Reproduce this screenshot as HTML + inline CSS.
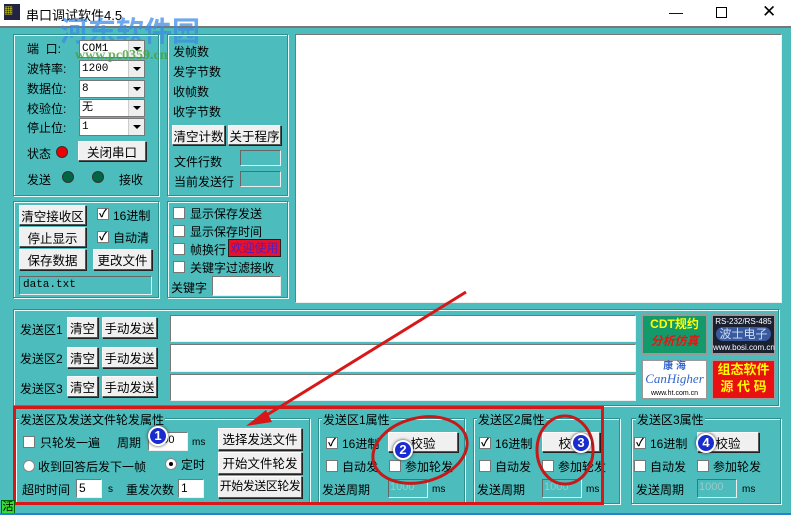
<!DOCTYPE html><html><head><meta charset="utf-8"><style>
*{margin:0;padding:0;box-sizing:border-box}
body{width:791px;height:515px;overflow:hidden;background:#4cbcbc;font-family:"Liberation Sans","Noto Sans CJK SC","WenQuanYi Zen Hei",sans-serif;font-size:12px;color:#000;position:relative}
.a{position:absolute;white-space:nowrap}
.g{position:absolute;border:1px solid #2f8f8f;box-shadow:inset 1px 1px 0 #e8ffff,1px 1px 0 #e8ffff}
.b{position:absolute;background:#f0f0f0;border:1px solid;border-color:#fff #555 #555 #fff;box-shadow:1px 1px 0 #222;text-align:center;font-size:12.5px;white-space:nowrap;overflow:hidden}
.t{position:absolute;background:#fff;border:1px solid;border-color:#777 #eee #eee #777}
.tg{position:absolute;background:#4cbcbc;border:1px solid;border-color:#666 #eee #eee #666}
.cb{position:absolute;width:12px;height:12px;background:#fff;border:1px solid #777;font-size:11px;line-height:10px;text-align:center;font-weight:bold}
.cmb{position:absolute;background:#fff;border:1px solid #777;height:18px;font-size:11px;padding-left:2px;line-height:16px;font-family:"Liberation Mono",monospace}
.cmb i{position:absolute;right:0;top:0;width:16px;height:16px;background:#eee;border-left:1px solid #ccc}
.cmb i:after{content:"";position:absolute;left:4px;top:6px;border:4px solid transparent;border-top:4px solid #000}
.led{position:absolute;width:12px;height:12px;border-radius:50%;border:1px solid #333}
.n{position:absolute;width:20px;height:20px;border-radius:50%;background:#1a2bd0;border:2px solid #fff;color:#fff;font-weight:bold;font-size:13px;text-align:center;line-height:16px;box-shadow:0 0 3px #333}
</style></head><body>
<div class="a" style="left:0;top:0;width:791px;height:26px;background:#fff"></div>
<div class="a" style="left:4px;top:4px;width:16px;height:16px;background:#224;color:#ff0;font-size:9px">▦</div>
<div class="a" style="left:26px;top:5px;font-size:13px">串口调试软件4.5</div>
<div class="a" style="left:669px;top:4px;font-size:14px">—</div>
<div class="a" style="left:716px;top:7px;width:11px;height:11px;border:1px solid #000"></div>
<div class="a" style="left:762px;top:2px;font-size:17px">✕</div>
<div class="a" style="left:0;top:26px;width:791px;height:2px;background:#777"></div>
<div class="a" style="left:60px;top:10px;font-size:28px;font-weight:bold;color:rgba(60,140,230,.75)">河东软件园</div>

<div class="g" style="left:13px;top:34px;width:146px;height:162px"></div>
<div class="a" style="left:27px;top:40px">端 &nbsp;口:</div>
<div class="a" style="left:27px;top:60px">波特率:</div>
<div class="a" style="left:27px;top:80px">数据位:</div>
<div class="a" style="left:27px;top:100px">校验位:</div>
<div class="a" style="left:27px;top:119px">停止位:</div>
<div class="cmb" style="left:79px;top:40px;width:66px">COM1<i></i></div>
<div class="cmb" style="left:79px;top:60px;width:66px">1200<i></i></div>
<div class="cmb" style="left:79px;top:80px;width:66px">8<i></i></div>
<div class="cmb" style="left:79px;top:99px;width:66px">无<i></i></div>
<div class="cmb" style="left:79px;top:118px;width:66px">1<i></i></div>
<div class="a" style="left:75px;top:48px;font-size:14px;font-weight:bold;color:rgba(70,160,60,.8);font-family:'Liberation Serif',serif">www.pc0359.cn</div>
<div class="a" style="left:27px;top:145px">状态</div>
<div class="led" style="left:56px;top:146px;background:#e00"></div>
<div class="b" style="left:78px;top:141px;width:68px;height:20px">关闭串口</div>
<div class="a" style="left:27px;top:171px">发送</div>
<div class="led" style="left:62px;top:171px;background:#064"></div>
<div class="led" style="left:92px;top:171px;background:#064"></div>
<div class="a" style="left:119px;top:171px">接收</div>

<div class="g" style="left:167px;top:34px;width:121px;height:162px"></div>
<div class="a" style="left:173px;top:43px">发帧数</div>
<div class="a" style="left:173px;top:63px">发字节数</div>
<div class="a" style="left:173px;top:83px">收帧数</div>
<div class="a" style="left:173px;top:103px">收字节数</div>
<div class="b" style="left:172px;top:125px;width:53px;height:20px">清空计数</div>
<div class="b" style="left:228px;top:125px;width:53px;height:20px">关于程序</div>
<div class="a" style="left:174px;top:153px">文件行数</div>
<div class="a" style="left:174px;top:173px">当前发送行</div>
<div class="tg" style="left:240px;top:150px;width:41px;height:16px"></div>
<div class="tg" style="left:240px;top:171px;width:41px;height:16px"></div>

<div class="t" style="left:295px;top:34px;width:487px;height:269px"></div>

<div class="g" style="left:13px;top:201px;width:146px;height:97px"></div>
<div class="b" style="left:19px;top:205px;width:67px;height:20px">清空接收区</div>
<div class="b" style="left:19px;top:227px;width:67px;height:20px">停止显示</div>
<div class="b" style="left:19px;top:249px;width:67px;height:21px">保存数据</div>
<div class="b" style="left:93px;top:249px;width:59px;height:21px">更改文件</div>
<div class="cb" style="left:97px;top:208px">✓</div><div class="a" style="left:113px;top:207px">16进制</div>
<div class="cb" style="left:97px;top:231px">✓</div><div class="a" style="left:113px;top:229px">自动清</div>
<div class="tg" style="left:19px;top:276px;width:133px;height:19px;font-family:'Liberation Mono',monospace;font-size:11px;padding:2px 3px">data.txt</div>

<div class="g" style="left:167px;top:201px;width:121px;height:97px"></div>
<div class="cb" style="left:173px;top:207px"></div><div class="a" style="left:190px;top:205px">显示保存发送</div>
<div class="cb" style="left:173px;top:225px"></div><div class="a" style="left:190px;top:223px">显示保存时间</div>
<div class="cb" style="left:173px;top:243px"></div><div class="a" style="left:190px;top:241px">帧换行</div>
<div class="a" style="left:228px;top:239px;width:53px;height:18px;background:#e8102a;border:1px solid #222;color:#5020c0;text-align:center;line-height:16px">欢迎使用</div>
<div class="cb" style="left:173px;top:261px"></div><div class="a" style="left:190px;top:259px">关键字过滤接收</div>
<div class="a" style="left:171px;top:279px">关键字</div>
<div class="t" style="left:212px;top:276px;width:69px;height:20px"></div>

<div class="g" style="left:13px;top:309px;width:766px;height:97px"></div>
<div class="a" style="left:20px;top:321px">发送区1</div>
<div class="a" style="left:20px;top:350px">发送区2</div>
<div class="a" style="left:20px;top:380px">发送区3</div>
<div class="b" style="left:67px;top:317px;width:31px;height:21px">清空</div>
<div class="b" style="left:102px;top:317px;width:55px;height:21px">手动发送</div>
<div class="b" style="left:67px;top:347px;width:31px;height:21px">清空</div>
<div class="b" style="left:102px;top:347px;width:55px;height:21px">手动发送</div>
<div class="b" style="left:67px;top:376px;width:31px;height:21px">清空</div>
<div class="b" style="left:102px;top:376px;width:55px;height:21px">手动发送</div>
<div class="t" style="left:170px;top:315px;width:466px;height:27px"></div>
<div class="t" style="left:170px;top:344px;width:466px;height:28px"></div>
<div class="t" style="left:170px;top:374px;width:466px;height:27px"></div>
<div class="a" style="left:641px;top:314px;width:67px;height:41px;background:#149a6a;border:2px solid #999;text-align:center;font-weight:bold;font-size:12px;line-height:17px;color:#ff0">CDT规约<br><span style="color:#e11;font-style:italic">分析仿真</span></div>
<div class="a" style="left:711px;top:314px;width:65px;height:41px;background:#1a2030;border:2px solid #999;text-align:center;color:#fff;font-size:8px;line-height:12px">RS-232/RS-485<br><span style="font-size:12px;color:#cde;background:#3a5aa0;border-radius:8px;padding:0 3px">波士电子</span><br>www.bosi.com.cn</div>
<div class="a" style="left:641px;top:359px;width:67px;height:41px;background:#fff;border:2px solid #999;text-align:center;font-size:10px;line-height:12px;color:#36c"><b>康 海</b><br><span style="font-family:'Liberation Serif',serif;font-style:italic;font-size:13px">CanHigher</span><br><span style="color:#000;font-size:7px">www.ht.com.cn</span></div>
<div class="a" style="left:711px;top:359px;width:65px;height:41px;background:#e81010;border:2px solid #999;text-align:center;font-weight:bold;font-size:13px;line-height:17px;color:#ff0">组态软件<br>源 代 码</div>

<div class="g" style="left:15px;top:418px;width:295px;height:86px"></div>
<div class="a" style="left:19px;top:411px;background:#4cbcbc;padding:0 1px">发送区及发送文件轮发属性</div>
<div class="cb" style="left:23px;top:436px"></div><div class="a" style="left:40px;top:434px">只轮发一遍</div>
<div class="a" style="left:117px;top:434px">周期</div>
<div class="t" style="left:148px;top:432px;width:40px;height:19px;font-size:11px;padding:1px">1000</div>
<div class="a" style="left:192px;top:437px;font-size:10px">ms</div>
<div class="b" style="left:218px;top:428px;width:84px;height:22px">选择发送文件</div>
<div class="b" style="left:218px;top:452px;width:84px;height:22px">开始文件轮发</div>
<div class="b" style="left:218px;top:476px;width:84px;height:22px;font-size:12px;letter-spacing:-0.5px">开始发送区轮发</div>
<div class="a" style="left:23px;top:460px;width:12px;height:12px;border-radius:50%;background:#fff;border:1px solid #888"></div>
<div class="a" style="left:38px;top:458px">收到回答后发下一帧</div>
<div class="a" style="left:165px;top:458px;width:12px;height:12px;border-radius:50%;background:#fff;border:1px solid #888"><div style="position:absolute;left:3px;top:3px;width:4px;height:4px;border-radius:50%;background:#000"></div></div>
<div class="a" style="left:181px;top:456px">定时</div>
<div class="a" style="left:22px;top:481px">超时时间</div>
<div class="t" style="left:76px;top:479px;width:26px;height:19px;padding:1px 2px">5</div>
<div class="a" style="left:108px;top:484px;font-size:10px">s</div>
<div class="a" style="left:126px;top:481px">重发次数</div>
<div class="t" style="left:178px;top:479px;width:26px;height:19px;padding:1px 2px">1</div>

<div class="g" style="left:318px;top:418px;width:147px;height:86px"></div>
<div class="a" style="left:322px;top:411px;background:#4cbcbc;padding:0 1px">发送区1属性</div>
<div class="cb" style="left:326px;top:437px">✓</div><div class="a" style="left:342px;top:435px">16进制</div>
<div class="b" style="left:388px;top:432px;width:70px;height:20px">校验</div>
<div class="cb" style="left:326px;top:460px"></div><div class="a" style="left:342px;top:458px">自动发</div>
<div class="cb" style="left:389px;top:460px"></div><div class="a" style="left:405px;top:458px">参加轮发</div>
<div class="a" style="left:322px;top:481px">发送周期</div>
<div class="tg" style="left:388px;top:479px;width:40px;height:19px;color:#9cc;font-size:11px;padding:1px">1000</div>
<div class="a" style="left:432px;top:484px;font-size:10px">ms</div>

<div class="g" style="left:473px;top:418px;width:147px;height:86px"></div>
<div class="a" style="left:477px;top:411px;background:#4cbcbc;padding:0 1px">发送区2属性</div>
<div class="cb" style="left:479px;top:437px">✓</div><div class="a" style="left:495px;top:435px">16进制</div>
<div class="b" style="left:542px;top:432px;width:58px;height:20px">校验</div>
<div class="cb" style="left:479px;top:460px"></div><div class="a" style="left:495px;top:458px">自动发</div>
<div class="cb" style="left:542px;top:460px"></div><div class="a" style="left:558px;top:458px">参加轮发</div>
<div class="a" style="left:477px;top:481px">发送周期</div>
<div class="tg" style="left:542px;top:479px;width:40px;height:19px;color:#9cc;font-size:11px;padding:1px">1000</div>
<div class="a" style="left:586px;top:484px;font-size:10px">ms</div>

<div class="g" style="left:631px;top:418px;width:150px;height:86px"></div>
<div class="a" style="left:636px;top:411px;background:#4cbcbc;padding:0 1px">发送区3属性</div>
<div class="cb" style="left:634px;top:437px">✓</div><div class="a" style="left:650px;top:435px">16进制</div>
<div class="b" style="left:697px;top:432px;width:62px;height:20px">校验</div>
<div class="cb" style="left:634px;top:460px"></div><div class="a" style="left:650px;top:458px">自动发</div>
<div class="cb" style="left:697px;top:460px"></div><div class="a" style="left:713px;top:458px">参加轮发</div>
<div class="a" style="left:636px;top:481px">发送周期</div>
<div class="tg" style="left:697px;top:479px;width:40px;height:19px;color:#9cc;font-size:11px;padding:1px">1000</div>
<div class="a" style="left:742px;top:484px;font-size:10px">ms</div>

<div class="a" style="left:13px;top:406px;width:591px;height:99px;border:3px solid #d81818"></div>
<svg class="a" style="left:0;top:0" width="791" height="515">
<line x1="466" y1="292" x2="262" y2="418" stroke="#d81818" stroke-width="3"/>
<polygon points="246,426 266,410 272,422" fill="#d81818"/>
<ellipse cx="420" cy="450" rx="48" ry="32" fill="none" stroke="#c81818" stroke-width="3" transform="rotate(-15 420 450)"/>
<ellipse cx="565" cy="450" rx="28" ry="34" fill="none" stroke="#c81818" stroke-width="3"/>
</svg>
<div class="n" style="left:148px;top:426px">1</div>
<div class="n" style="left:393px;top:440px">2</div>
<div class="n" style="left:571px;top:433px">3</div>
<div class="n" style="left:696px;top:433px">4</div>
<div class="a" style="left:1px;top:500px;width:14px;height:14px;background:#3d3;border:1px solid #060;font-size:11px;line-height:12px;text-align:center">活</div>
<div class="a" style="left:0;top:513px;width:791px;height:2px;background:#2a7fd0"></div>
</body></html>
